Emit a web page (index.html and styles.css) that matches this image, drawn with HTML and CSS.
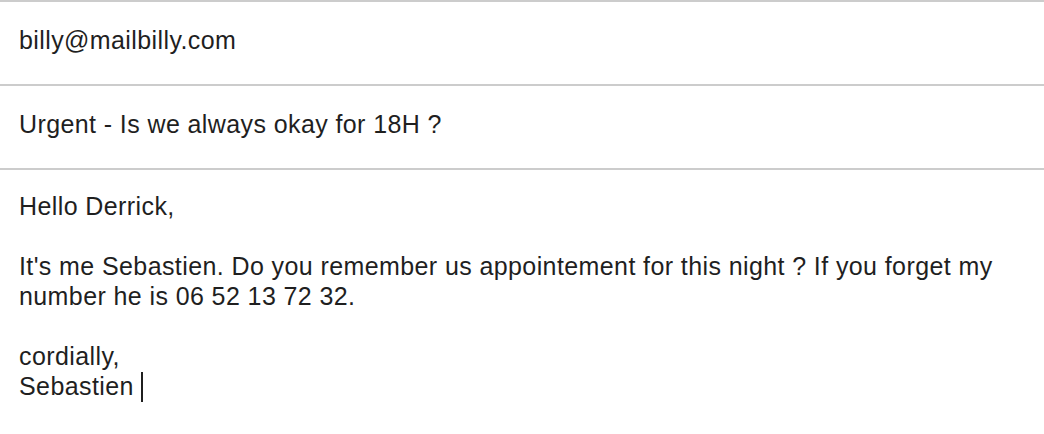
FILE: index.html
```html
<!DOCTYPE html>
<html lang="en">
<head>
<meta charset="utf-8">
<title>Compose</title>
<link rel="stylesheet" href="styles.css">
</head>
<body>
<div class="compose">
  <div class="field">billy@mailbilly.com</div>
  <div class="field">Urgent - Is we always okay for 18H ?</div>
  <div class="body">
    <p class="para">Hello Derrick,</p>
    <p class="para">It's me Sebastien. Do you remember us appointement for this night ? If you forget my number he is 06 52 13 72 32.</p>
    <p class="para">cordially,<br>Sebastien <span class="caret"></span></p>
  </div>
</div>
</body>
</html>
```
FILE: styles.css
```css
html, body {
  margin: 0;
  padding: 0;
  background: #ffffff;
}
.compose {
  font-family: "Liberation Sans", Arial, sans-serif;
  font-size: 25px;
  letter-spacing: 0.4px;
  line-height: 30px;
  color: #1f1f1f;
  border-top: 2px solid #cccccc;
}
.field {
  padding: 23px 19px 29px 19px;
  border-bottom: 2px solid #cccccc;
}
.body {
  padding: 21px 30px 20px 19px;
}
.para {
  margin: 0 0 30px 0;
}
.caret {
  display: inline-block;
  width: 2px;
  height: 30px;
  background: #1f1f1f;
  vertical-align: -7px;
}
```
